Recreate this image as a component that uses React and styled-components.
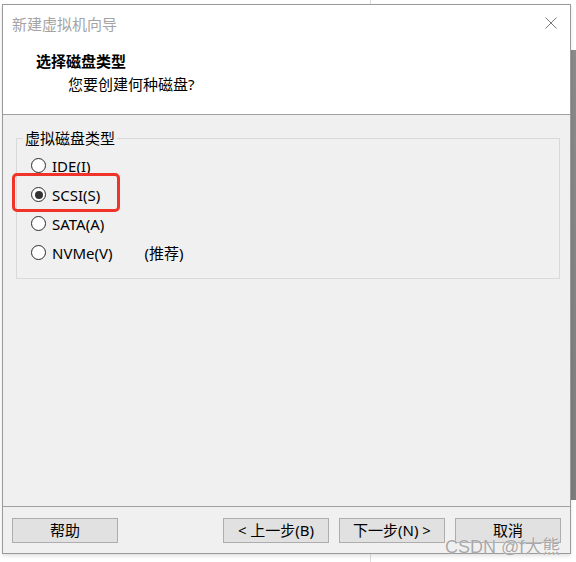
import React from "react";
import styled, { createGlobalStyle } from "styled-components";

const GlobalStyle = createGlobalStyle`
  html, body {
    margin: 0;
    padding: 0;
    background: #ffffff;
  }
  body {
    font-family: "Noto Sans", "Noto Sans CJK SC", sans-serif;
  }
`;

const Page = styled.div`
  position: relative;
  width: 576px;
  height: 562px;
  overflow: hidden;
  padding: 4px 0 0 2px;
  box-sizing: border-box;
  background-color: #ffffff;
  background-image:
    linear-gradient(#8a8a8a, #7d7d7d),
    linear-gradient(#dcdcdc, #dcdcdc);
  background-repeat: no-repeat;
  background-size: 5px 450px, 1px 562px;
  background-position: 571px 50px, 370px 0;
`;

const Dialog = styled.div`
  width: 569px;
  height: 550px;
  box-sizing: border-box;
  border: 1px solid #9a9a9a;
  background: #f0f0f0;
  display: flex;
  flex-direction: column;
  box-shadow: 0 2px 4px rgba(0, 0, 0, 0.12);
`;

const Top = styled.div`
  background: #ffffff;
  height: 109px;
  border-bottom: 1px solid #a0a0a0;
  display: flex;
  flex-direction: column;
`;

const TitleBar = styled.div`
  height: 36px;
  display: flex;
  align-items: center;
  justify-content: space-between;
  padding: 0 13px 0 9px;
`;

const WindowTitle = styled.span`
  font-size: 15px;
  color: #a4a4a4;
`;

const Close = styled.svg`
  width: 12px;
  height: 12px;
`;

const Header = styled.div`
  padding: 10px 0 0 33px;
  display: flex;
  flex-direction: column;
  gap: 3px;
`;

const Heading = styled.div`
  font-size: 15px;
  font-weight: 700;
  line-height: 20px;
  color: #000;
`;

const Subheading = styled.div`
  font-size: 15px;
  line-height: 20px;
  color: #000;
  padding-left: 32px;
`;

const Body = styled.div`
  flex: 1;
  padding: 13px 10px 0 13px;
`;

const Group = styled.fieldset`
  margin: 0;
  padding: 0 0 11px 14px;
  border: 1px solid #d9d9d9;
  min-width: 0;
`;

const Legend = styled.legend`
  font-size: 15px;
  line-height: 20px;
  color: #000;
  padding: 0 2px;
  margin-left: -8px;
`;

const Options = styled.div`
  padding-top: 3px;
  display: flex;
  flex-direction: column;
`;

const Option = styled.label`
  position: relative;
  height: 29px;
  display: flex;
  align-items: center;
  gap: 6px;
  font-size: 15px;
  color: #000;
`;

const Radio = styled.span`
  width: 15px;
  height: 15px;
  box-sizing: border-box;
  border-radius: 50%;
  border: 1px solid #2b2b2b;
  background: #fff;
  display: flex;
  align-items: center;
  justify-content: center;

  &::after {
    content: "";
    width: 8px;
    height: 8px;
    border-radius: 50%;
    background: ${(p) => (p.$checked ? "#333" : "transparent")};
  }
`;

const Note = styled.span`
  margin-left: 26px;
`;

const Highlight = styled.span`
  position: absolute;
  left: -19px;
  top: -7px;
  width: 108px;
  height: 39px;
  box-sizing: border-box;
  border: 3px solid #f0342a;
  border-radius: 5px;
`;

const Footer = styled.div`
  height: 46px;
  border-top: 1px solid #a0a0a0;
  box-sizing: content-box;
  display: flex;
  align-items: flex-start;
  justify-content: space-between;
  padding: 0 9px;
`;

const Nav = styled.div`
  display: flex;
  gap: 10px;
`;

const Button = styled.button`
  margin-top: 11px;
  width: 106px;
  height: 25px;
  box-sizing: border-box;
  border: 1px solid #adadad;
  background: #e1e1e1;
  font-family: "Noto Sans", "Noto Sans CJK SC", sans-serif;
  font-size: 15px;
  line-height: 1;
  color: #000;
  padding: 0;
`;

const Watermark = styled.div`
  position: absolute;
  left: 445px;
  top: 532px;
  font-family: "Liberation Sans", "Noto Sans CJK SC", sans-serif;
  font-size: 18px;
  color: rgba(140, 140, 140, 0.75);
  text-shadow: 0 0 1px #fff;
  pointer-events: none;
`;

const options = [
  { label: "IDE(I)" },
  { label: "SCSI(S)", checked: true },
  { label: "SATA(A)" },
  { label: "NVMe(V)", note: "(推荐)" },
];

const App = () => {
  return (
    <Page>
      <GlobalStyle />
      <Dialog>
        <Top>
          <TitleBar>
            <WindowTitle>新建虚拟机向导</WindowTitle>
            <Close viewBox="0 0 12 12">
              <path d="M0.5 0.5 L11.5 11.5 M11.5 0.5 L0.5 11.5" stroke="#7a7a7a" strokeWidth="1" fill="none" />
            </Close>
          </TitleBar>
          <Header>
            <Heading>选择磁盘类型</Heading>
            <Subheading>您要创建何种磁盘?</Subheading>
          </Header>
        </Top>
        <Body>
          <Group>
            <Legend>虚拟磁盘类型</Legend>
            <Options>
              {options.map((o) => (
                <Option key={o.label}>
                  <Radio $checked={o.checked} />
                  {o.label}
                  {o.note && <Note>{o.note}</Note>}
                  {o.checked && <Highlight />}
                </Option>
              ))}
            </Options>
          </Group>
        </Body>
        <Footer>
          <Button>帮助</Button>
          <Nav>
            <Button>&lt; 上一步(B)</Button>
            <Button>下一步(N) &gt;</Button>
            <Button>取消</Button>
          </Nav>
        </Footer>
      </Dialog>
      <Watermark>CSDN @f大熊</Watermark>
    </Page>
  );
};

export default App;
